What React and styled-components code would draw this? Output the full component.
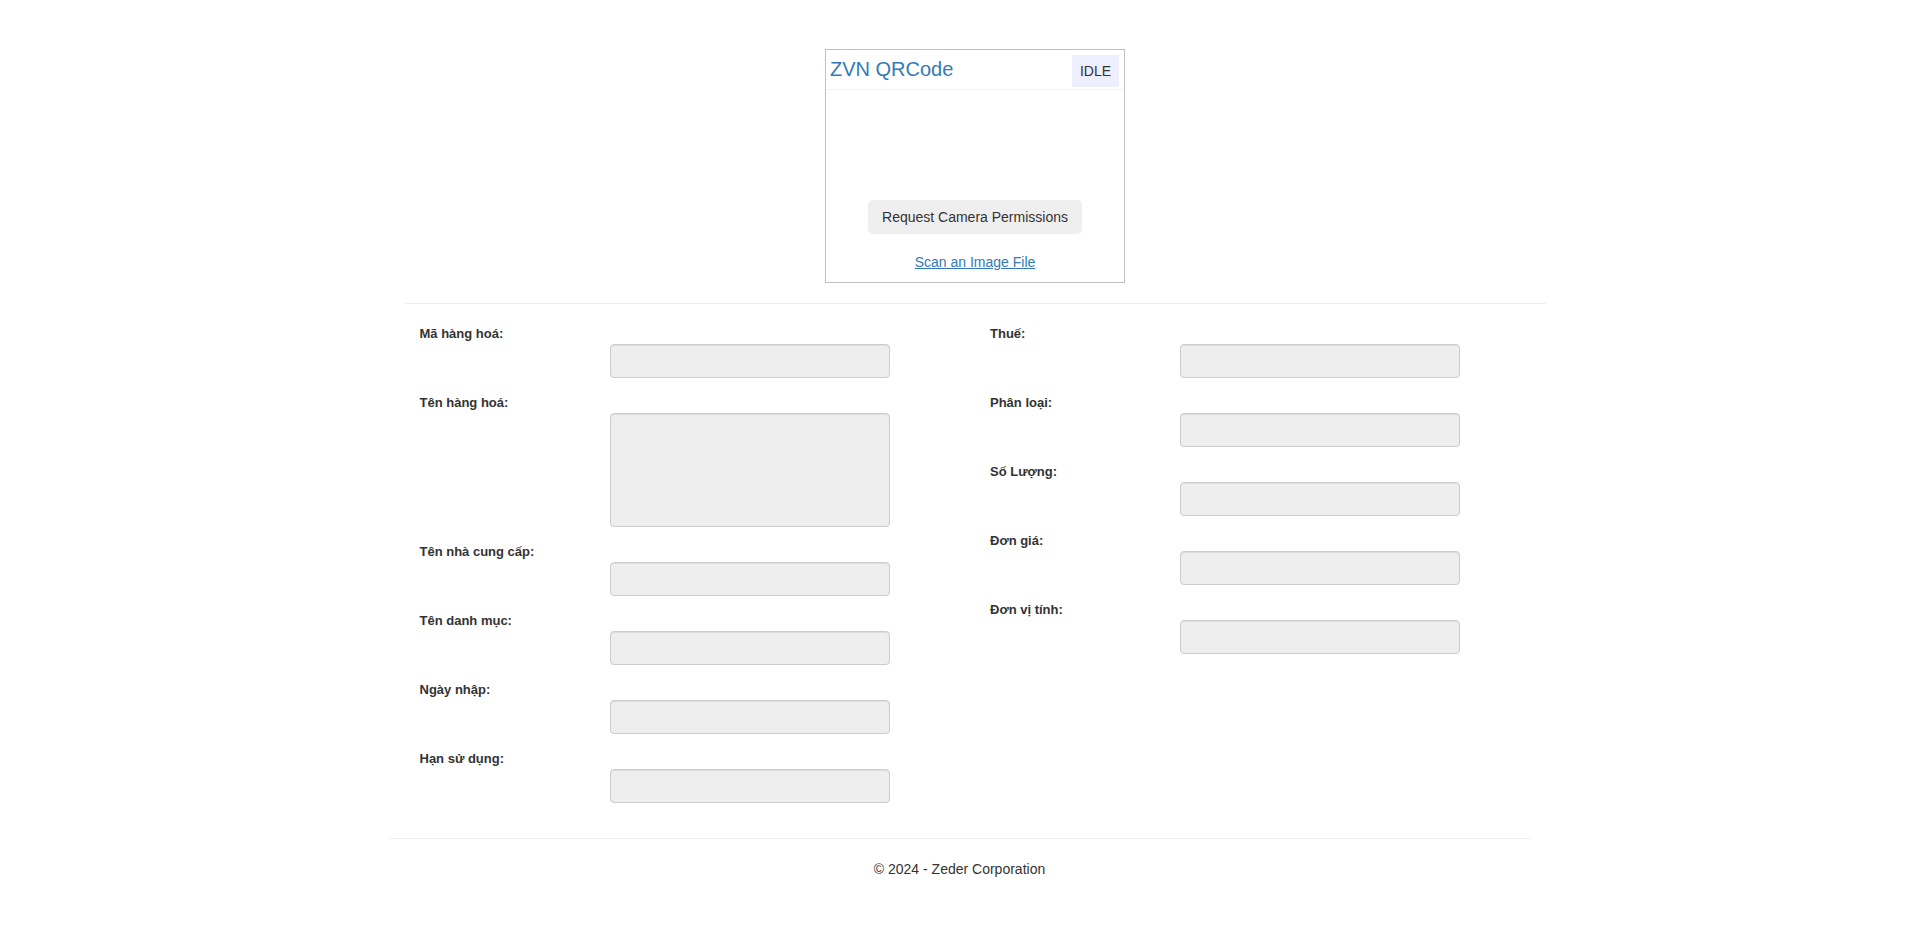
import React from "react";
import styled, { createGlobalStyle } from "styled-components";

const GlobalStyle = createGlobalStyle`
  * { box-sizing: border-box; }
  body {
    margin: 0;
    background: #fff;
    color: #333;
    font-family: "Liberation Sans", Arial, Helvetica, sans-serif;
    font-size: 14px;
    line-height: 20px;
  }
`;

const Container = styled.div`
  width: 1170px;
  margin: 0 auto;
  padding: 49px 15px 0;
`;

const BodyContent = styled.div`
  margin: 0 -16px 0 15px;
`;

const Reader = styled.div`
  width: 300px;
  margin: 0 auto;
  border: 1px solid silver;
`;

const ReaderHeader = styled.div`
  display: flex;
  justify-content: space-between;
  align-items: flex-start;
  padding: 5px 5px 2px 4px;
  border-bottom: 1px solid #f3f3f3;
`;

const ReaderTitle = styled.span`
  font-size: 20px;
  line-height: 23px;
  color: #337ab7;
  margin-top: 3px;
`;

const StatusBadge = styled.span`
  display: inline-block;
  height: 32px;
  line-height: 32px;
  padding: 0 8px;
  background: #eef;
  color: #333;
  font-size: 14px;
`;

const ReaderBody = styled.div`
  display: flex;
  flex-direction: column;
  align-items: center;
  padding: 110px 0 10px;
`;

const PermissionButton = styled.button`
  height: 34px;
  padding: 0 14px;
  border: none;
  border-radius: 5px;
  background: #efefef;
  color: #333;
  font-family: inherit;
  font-size: 14px;
`;

const FileLink = styled.a`
  margin-top: 18px;
  color: #337ab7;
  text-decoration: underline;
  font-size: 14px;
  line-height: 20px;
`;

const Rule = styled.hr`
  margin: 20px 0;
  border: 0;
  border-top: 1px solid #eee;
  height: 0;
`;

const FormGrid = styled.div`
  display: grid;
  grid-template-columns: 1fr 1fr;
  align-items: start;
`;

const FormColumn = styled.div`
  padding: 0 15px;
`;

const Field = styled.div`
  margin-bottom: 15px;
`;

const Label = styled.label`
  display: block;
  font-size: 13px;
  font-weight: bold;
  line-height: 20px;
  color: #333;
`;

const Input = styled.input`
  display: block;
  width: 280px;
  height: ${(p) => (p.$tall ? "114px" : "34px")};
  margin-left: 190px;
  border: 1px solid #ccc;
  border-radius: 4px;
  background: #eee;
  box-shadow: inset 0 1px 1px rgba(0, 0, 0, 0.075);
  font-family: inherit;
  font-size: 14px;
  padding: 6px 12px;
  resize: none;
`;

const Footer = styled.footer`
  text-align: center;
  font-size: 14px;
  line-height: 20px;
  padding-bottom: 20px;
`;

const leftFields = [
  { label: "Mã hàng hoá:" },
  { label: "Tên hàng hoá:", tall: true },
  { label: "Tên nhà cung cấp:" },
  { label: "Tên danh mục:" },
  { label: "Ngày nhập:" },
  { label: "Hạn sử dụng:" },
];

const rightFields = [
  { label: "Thuế:" },
  { label: "Phân loại:" },
  { label: "Số Lượng:" },
  { label: "Đơn giá:" },
  { label: "Đơn vị tính:" },
];

function FieldList({ fields }) {
  return (
    <FormColumn>
      {fields.map((f) => (
        <Field key={f.label}>
          <Label>{f.label}</Label>
          <Input as={f.tall ? "textarea" : "input"} $tall={f.tall} readOnly />
        </Field>
      ))}
    </FormColumn>
  );
}

export default function App() {
  return (
    <>
      <GlobalStyle />
      <Container>
        <BodyContent>
          <Reader>
            <ReaderHeader>
              <ReaderTitle>ZVN QRCode</ReaderTitle>
              <StatusBadge>IDLE</StatusBadge>
            </ReaderHeader>
            <ReaderBody>
              <PermissionButton>Request Camera Permissions</PermissionButton>
              <FileLink href="#">Scan an Image File</FileLink>
            </ReaderBody>
          </Reader>
          <Rule />
          <FormGrid>
            <FieldList fields={leftFields} />
            <FieldList fields={rightFields} />
          </FormGrid>
        </BodyContent>
        <Rule />
        <Footer>© 2024 - Zeder Corporation</Footer>
      </Container>
    </>
  );
}
